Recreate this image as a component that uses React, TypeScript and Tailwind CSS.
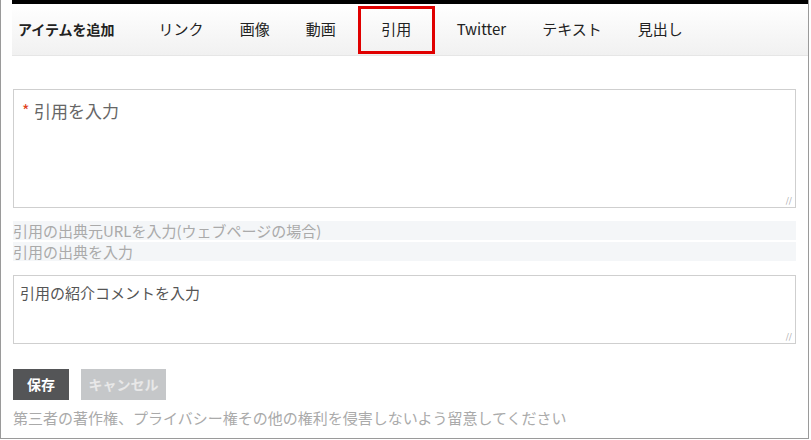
export default function App() {
  const font = { fontFamily: '"Noto Sans CJK JP", "Noto Sans", sans-serif' };
  const tabs = ['リンク', '画像', '動画', '引用', 'Twitter', 'テキスト', '見出し'];
  return (
    <div className="h-[440px] w-[811px] bg-white" style={font}>
      <div className="flex h-[439px] w-[809px] flex-col border border-[#9a9a9a] border-t-0">
        <div className="ml-[11px] h-[4px] bg-black" />
        <div className="ml-[11px] flex h-[52px] items-center bg-gradient-to-b from-white to-[#f1f1f1] border-b border-[#e6e6e6]">
          <span className="ml-[6px] mr-[26px] text-[14px] font-bold text-[#222]">アイテムを追加</span>
          {tabs.map((t) =>
            t === '引用' ? (
              <span
                key={t}
                className="mx-[4px] flex h-[48px] w-[77px] items-center justify-center border-[3px] border-[#e00000] text-[15px] text-[#222]"
              >
                {t}
              </span>
            ) : (
              <span key={t} className="px-[18px] text-[15px] text-[#222]">
                {t}
              </span>
            )
          )}
        </div>
        <div className="flex flex-col px-[12px] pt-[33px]">
          <div className="relative h-[119px] border border-[#cfcfcf]">
            <span className="absolute left-[8px] top-[8px] text-[16px] text-[#e04020]">*</span>
            <span className="absolute left-[20px] top-[8px] text-[17px] text-[#666]">引用を入力</span>
            <span className="absolute bottom-[1px] right-[3px] text-[8px] text-[#999]">//</span>
          </div>
          <div className="mt-[13px] h-[19px] bg-[#f4f6f8] text-[15px] leading-[19px] text-[#aaa]">
            引用の出典元URLを入力(ウェブページの場合)
          </div>
          <div className="mt-[2px] h-[19px] bg-[#f4f6f8] text-[15px] leading-[19px] text-[#aaa]">
            引用の出典を入力
          </div>
          <div className="relative mt-[14px] h-[69px] border border-[#cfcfcf]">
            <span className="absolute left-[6px] top-[6px] text-[15px] text-[#555]">引用の紹介コメントを入力</span>
            <span className="absolute bottom-[1px] right-[3px] text-[8px] text-[#999]">//</span>
          </div>
          <div className="mt-[25px] flex gap-[12px]">
            <span className="flex h-[31px] w-[56px] items-center justify-center bg-[#545557] text-[14px] font-bold text-white">保存</span>
            <span className="flex h-[31px] w-[85px] items-center justify-center bg-[#c5c7c9] text-[14px] font-bold text-[#e8e8e8]">キャンセル</span>
          </div>
          <div className="mt-[7px] text-[15px] text-[#aaa]">
            第三者の著作権、プライバシー権その他の権利を侵害しないよう留意してください
          </div>
        </div>
      </div>
    </div>
  );
}
